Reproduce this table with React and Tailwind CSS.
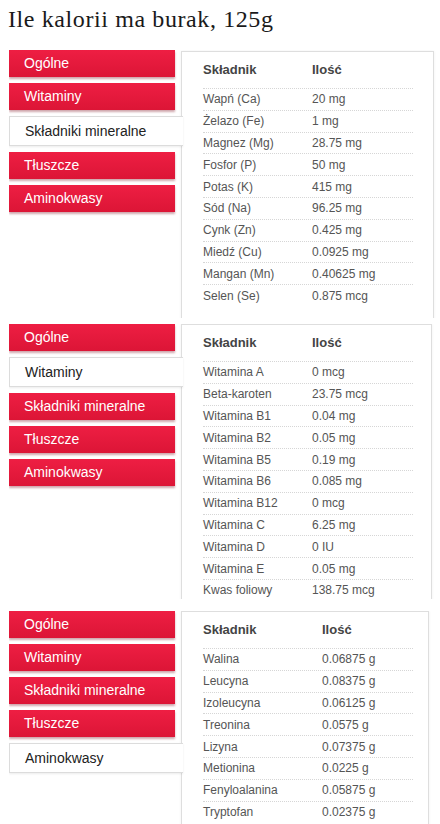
import React from 'react';

const TABS = ['Ogólne', 'Witaminy', 'Składniki mineralne', 'Tłuszcze', 'Aminokwasy'];

const minerals = [
  ['Wapń (Ca)', '20 mg'],
  ['Żelazo (Fe)', '1 mg'],
  ['Magnez (Mg)', '28.75 mg'],
  ['Fosfor (P)', '50 mg'],
  ['Potas (K)', '415 mg'],
  ['Sód (Na)', '96.25 mg'],
  ['Cynk (Zn)', '0.425 mg'],
  ['Miedź (Cu)', '0.0925 mg'],
  ['Mangan (Mn)', '0.40625 mg'],
  ['Selen (Se)', '0.875 mcg'],
];

const vitamins = [
  ['Witamina A', '0 mcg'],
  ['Beta-karoten', '23.75 mcg'],
  ['Witamina B1', '0.04 mg'],
  ['Witamina B2', '0.05 mg'],
  ['Witamina B5', '0.19 mg'],
  ['Witamina B6', '0.085 mg'],
  ['Witamina B12', '0 mcg'],
  ['Witamina C', '6.25 mg'],
  ['Witamina D', '0 IU'],
  ['Witamina E', '0.05 mg'],
  ['Kwas foliowy', '138.75 mcg'],
];

const aminos = [
  ['Walina', '0.06875 g'],
  ['Leucyna', '0.08375 g'],
  ['Izoleucyna', '0.06125 g'],
  ['Treonina', '0.0575 g'],
  ['Lizyna', '0.07375 g'],
  ['Metionina', '0.0225 g'],
  ['Fenyloalanina', '0.05875 g'],
  ['Tryptofan', '0.02375 g'],
];

function Tabs({ active }) {
  return (
    <div className="w-[172px] shrink-0 flex flex-col">
      {TABS.map((t) =>
        t === active ? (
          <div
            key={t}
            className="relative z-10 w-[174px] h-[30px] mb-[6px] flex items-center pl-[15px] bg-white border border-r-0 border-[#dcdcdc] text-[14px] text-[#222] shadow-[0_1px_2px_rgba(0,0,0,0.08)]"
          >
            {t}
          </div>
        ) : (
          <div
            key={t}
            className="w-[166px] h-[27px] mb-[6px] flex items-center pl-[15px] bg-gradient-to-b from-[#ee1e43] to-[#dc1536] text-[14px] text-white shadow-[0_2px_2px_rgba(120,0,20,0.35)]"
          >
            {t}
          </div>
        )
      )}
    </div>
  );
}

function Panel({ rows, col1, width, height }) {
  return (
    <div className={`${width} ${height} shrink-0 bg-white border border-[#dedede] shadow-[0_0_3px_rgba(0,0,0,0.06)] pl-[21px]`}>
      <div className="w-[210px]">
        <div className="flex pt-[8px] pb-[8px] leading-[20px] text-[13px] font-bold text-[#444]">
          <div className={col1}>Składnik</div>
          <div>Ilość</div>
        </div>
        {rows.map(([name, val]) => (
          <div key={name} className="flex items-center h-[21.8px] border-t border-dotted border-[#d6d6d6] text-[12px] text-[#555]">
            <div className={col1}>{name}</div>
            <div>{val}</div>
          </div>
        ))}
      </div>
    </div>
  );
}

export default function App() {
  return (
    <div className="w-[440px] min-h-[824px] bg-white pl-[9px] font-['Liberation_Sans',Arial,sans-serif] overflow-hidden">
      <h1 className="pt-[5px] mb-[17px] text-[24px] leading-[28px] tracking-[0.6px] font-normal text-[#1a1a1a] font-['Liberation_Serif','Times_New_Roman',serif] -ml-[1px]">
        Ile kalorii ma burak, 125g
      </h1>

      <div className="flex items-start h-[268px] overflow-hidden">
        <Tabs active="Składniki mineralne" />
        <div className="mt-[1px]">
          <Panel rows={minerals} col1="w-[109px]" width="w-[253px]" height="h-[320px]" />
        </div>
      </div>

      <div className="flex items-start h-[275px] mt-[6px] overflow-hidden">
        <Tabs active="Witaminy" />
        <Panel rows={vitamins} col1="w-[109px]" width="w-[251px]" height="h-[340px]" />
      </div>

      <div className="flex items-start mt-[12px] h-[213px] overflow-hidden">
        <Tabs active="Aminokwasy" />
        <Panel rows={aminos} col1="w-[119px]" width="w-[248px]" height="h-[300px]" />
      </div>
    </div>
  );
}
